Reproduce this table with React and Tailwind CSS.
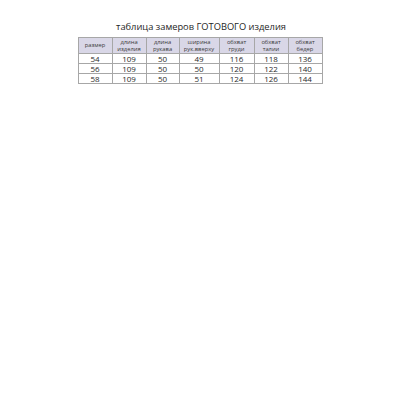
export default function App() {
  const cols = [34, 34, 33, 40, 35, 34, 34];
  const headers = [
    ["размер"],
    ["длина", "изделия"],
    ["длина", "рукава"],
    ["ширина", "рук.вверху"],
    ["обхват", "груди"],
    ["обхват", "талии"],
    ["обхват", "бедер"],
  ];
  const rows = [
    ["54", "109", "50", "49", "116", "118", "136"],
    ["56", "109", "50", "50", "120", "122", "140"],
    ["58", "109", "50", "51", "124", "126", "144"],
  ];
  return (
    <div className="w-[400px] h-[400px] bg-white flex flex-col items-center" style={{ fontFamily: '"Open Sans", Lato, sans-serif' }}>
      <div className="mt-[16px] h-[21px] text-[9.3px] leading-[21px] text-[#1e1e1e] pl-[2px]">таблица замеров ГОТОВОГО изделия</div>
      <table className="border-collapse text-[#2a2a2a]" style={{ tableLayout: "fixed" }}>
        <colgroup>
          {cols.map((w, i) => (
            <col key={i} style={{ width: w }} />
          ))}
        </colgroup>
        <thead>
          <tr className="h-[16px] bg-[#d9d7e7]">
            {headers.map((h, i) => (
              <th key={i} className="border border-[#a7a7a7] p-0 font-normal text-[5.8px] leading-[6.6px] text-center text-[#3a3a3a]">
                {h.map((l, j) => (
                  <div key={j}>{l}</div>
                ))}
              </th>
            ))}
          </tr>
        </thead>
        <tbody>
          {rows.map((r, i) => (
            <tr key={i} className="h-[10px]">
              {r.map((c, j) => (
                <td key={j} className="border border-[#a7a7a7] p-0 text-center text-[8px] leading-[9px]">
                  {c}
                </td>
              ))}
            </tr>
          ))}
        </tbody>
      </table>
    </div>
  );
}
